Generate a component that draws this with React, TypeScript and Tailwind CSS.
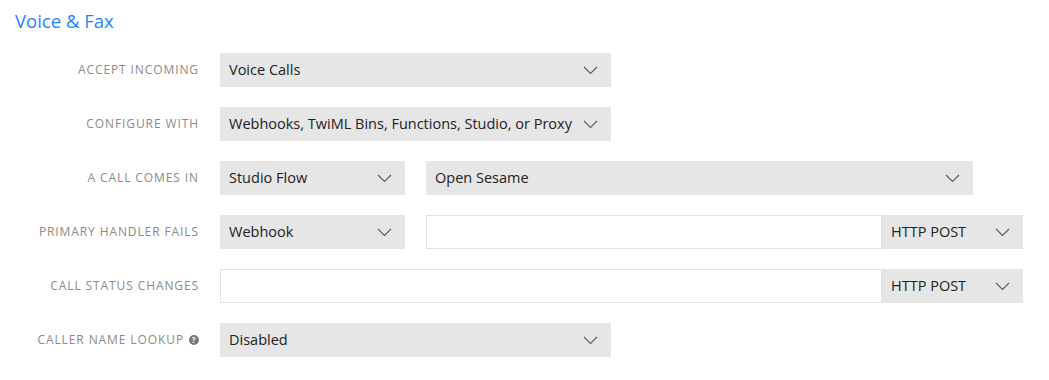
import type { ReactNode } from 'react';

function Chevron() {
  return (
    <svg width="15" height="9" viewBox="0 0 15 9" className="shrink-0">
      <path d="M1 1l6.5 6.5L14 1" fill="none" stroke="#5a5a5a" strokeWidth="1.1" />
    </svg>
  );
}

function Select({ value, width }: { value: string; width: string }) {
  return (
    <div
      className={`${width} flex h-[34px] shrink-0 items-center justify-between bg-[#e6e6e6] pl-[9px] pr-[13px] text-[14.5px] text-[#222]`}
    >
      <span>{value}</span>
      <Chevron />
    </div>
  );
}

function Input({ width }: { width: string }) {
  return <div className={`${width} h-[34px] shrink-0 border border-[#e2e2e2] bg-white`} />;
}

function Row({ label, help, children }: { label: string; help?: boolean; children: ReactNode }) {
  return (
    <div className="flex items-center">
      <div className="flex w-[199px] items-center justify-end gap-[5px] text-[12px] uppercase tracking-[0.075em] text-[#8e8a85]">
        <span>{label}</span>
        {help && (
          <span className="flex h-[10px] w-[10px] items-center justify-center rounded-full bg-[#777] text-[8px] font-bold leading-none text-white">
            ?
          </span>
        )}
      </div>
      <div className="ml-[21px] flex items-center">{children}</div>
    </div>
  );
}

export default function App() {
  return (
    <div className="h-[380px] w-[1049px] bg-white pl-[15px] pt-[9px] font-['Open_Sans',sans-serif]">
      <h2 className="text-[18.5px] leading-[24px] text-[#1f84ff]">Voice &amp; Fax</h2>

      <div className="-ml-[15px] mt-[20px] flex flex-col gap-[20px]">
        <Row label="Accept Incoming">
          <Select value="Voice Calls" width="w-[391px]" />
        </Row>
        <Row label="Configure With">
          <Select value="Webhooks, TwiML Bins, Functions, Studio, or Proxy" width="w-[391px]" />
        </Row>
        <Row label="A Call Comes In">
          <Select value="Studio Flow" width="w-[185px]" />
          <div className="ml-[21px]">
            <Select value="Open Sesame" width="w-[547px]" />
          </div>
        </Row>
        <Row label="Primary Handler Fails">
          <Select value="Webhook" width="w-[185px]" />
          <div className="ml-[21px] flex">
            <Input width="w-[456px]" />
            <Select value="HTTP POST" width="w-[141px]" />
          </div>
        </Row>
        <Row label="Call Status Changes">
          <Input width="w-[662px]" />
          <Select value="HTTP POST" width="w-[141px]" />
        </Row>
        <Row label="Caller Name Lookup" help>
          <Select value="Disabled" width="w-[391px]" />
        </Row>
      </div>
    </div>
  );
}
